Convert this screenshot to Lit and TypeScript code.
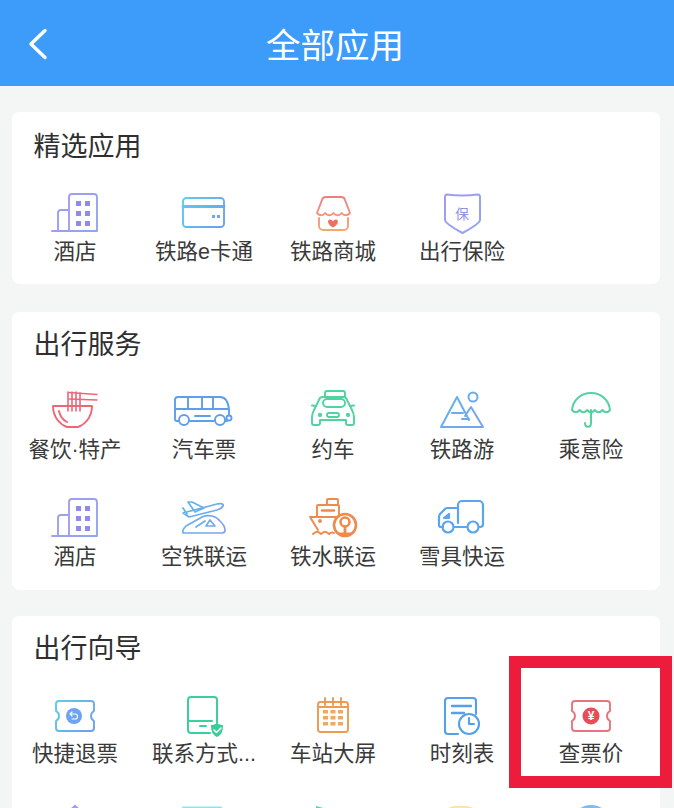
import { LitElement, html, css, svg } from "lit";
import { customElement } from "lit/decorators.js";

const defs = svg`
  <linearGradient id="gPurple" gradientUnits="userSpaceOnUse" x1="0" y1="8" x2="48" y2="46"><stop offset="0" stop-color="#a79af0"/><stop offset="1" stop-color="#8fa6f2"/></linearGradient>
  <linearGradient id="gBlue" gradientUnits="userSpaceOnUse" x1="3" y1="12" x2="44" y2="44"><stop offset="0" stop-color="#58d0e8"/><stop offset="1" stop-color="#6f9cf2"/></linearGradient>
  <linearGradient id="gOrange" gradientUnits="userSpaceOnUse" x1="0" y1="12" x2="0" y2="46"><stop offset="0" stop-color="#ee7d80"/><stop offset="1" stop-color="#f6a872"/></linearGradient>
  <linearGradient id="gSky" gradientUnits="userSpaceOnUse" x1="3" y1="10" x2="45" y2="44"><stop offset="0" stop-color="#58b8ec"/><stop offset="1" stop-color="#7fa0ee"/></linearGradient>
`;

const S = (body: unknown, stroke: string, width = 1.9) => html`<svg class="ic" viewBox="0 0 48 48" fill="none" stroke="${stroke}" stroke-width="${width}" stroke-linecap="round" stroke-linejoin="round"><defs>${defs}</defs>${body}</svg>`;

const ticketPath = "M8 14H40a3 3 0 0 1 3 3v7c-4 2-4 8 0 10v7a3 3 0 0 1-3 3H8a3 3 0 0 1-3-3V34c4-2 4-8 0-10V17a3 3 0 0 1 3-3Z";

const hotel = S(svg`
  <path d="M1 46H46M7 46V28a3 3 0 0 1 3-3h8M18 46V12a3 3 0 0 1 3-3h22a3 3 0 0 1 3 3v34"/>
  <g fill="#8f8aec" stroke="none"><rect x="25" y="16" width="5" height="5"/><rect x="34" y="16" width="5" height="5"/><rect x="25" y="26" width="5" height="5"/><rect x="34" y="26" width="5" height="5"/><rect x="25" y="36" width="5" height="5"/><rect x="34" y="36" width="5" height="5"/></g>`, "url(#gPurple)");
const card = S(svg`
  <rect x="3" y="13" width="41" height="29" rx="3.500"/><path d="M3 21.500H44" stroke-width="2.800"/>
  <path d="M33.500 30v3M38.500 30v3" stroke-width="3" stroke-linecap="butt"/>`, "url(#gBlue)");
const shop = S(svg`
  <path d="M8 28 13 15a4 4 0 0 1 4-3h15a4 4 0 0 1 4 3l5 13c-3 3-6 3-8.250 0-2.500 3-6 3-8.250 0-2.500 3-6 3-8.250 0-2.500 3-5.500 3-8.250 0Z"/>
  <path d="M10 33v8a4 4 0 0 0 4 4h21a4 4 0 0 0 4-4v-8"/>
  <path d="M24 42.500c-6.500-3.500-5.500-8-3-8 1.800 0 3 1.800 3 1.800s1.200-1.800 3-1.800c2.500 0 3.500 4.500-3 8Z" fill="#ef6f5f" stroke="none"/>`, "url(#gOrange)");
const shield = html`<span class="box"><svg class="ic" viewBox="0 0 48 48" fill="none" stroke="url(#gPurple)" stroke-width="2" stroke-linejoin="round"><defs>${defs}</defs><path d="M9 9.500Q24 11.500 40 9.500 42 9.500 42 12V35C42 38 30 45 24.500 48 19 45 7 38 7 35V12Q7 9.500 9 9.500Z"/></svg><span class="bao">保</span></span>`;
const noodle = S(svg`
  <path d="M2 23H41C41 35 33 42 27 44H16C10 42 2 35 2 23Z"/>
  <path d="M8 28c1 5 4 9 8 11"/>
  <path d="M17 28V9M21 28V9M25 28V9M29 28V10" stroke-width="1.600"/>
  <path d="M18 9.500 46 11.500M18 16 46 17" stroke-width="1.600"/>`, "#ee6678");
const bus = S(svg`
  <path d="M-1 38H-3a2 2 0 0 1-2-2V17a3 3 0 0 1 3-3H40c5 0 8 4 9 12v6"/>
  <path d="M-5 26H48M8 14V26M22 14V26M33 14V26M15 33H30M10 38H34"/>
  <circle cx="4" cy="37" r="5"/><circle cx="40" cy="37" r="5"/><path d="M45 38h2"/><circle cx="49" cy="35" r="2.500" fill="#fff"/>`, "#5d9fe8");
const taxi = S(svg`
  <path d="M16 14V10a2 2 0 0 1 2-2H34a2 2 0 0 1 2 2v4"/>
  <path d="M5 27 10 17a4 4 0 0 1 4-3H34a4 4 0 0 1 4 3l5 10"/>
  <path d="M5 27c-1 2-2 4-2 7V40a2 2 0 0 0 2 2h4a2 2 0 0 0 2-2v-3H37v3a2 2 0 0 0 2 2h4a2 2 0 0 0 2-2V34c0-3-1-5-2-7"/>
  <path d="M3 22.500 7 23M45 22.500 41 23"/>
  <rect x="14" y="16" width="22" height="8" rx="4"/><rect x="18" y="30" width="12" height="4" rx="2"/><circle cx="11" cy="32" r="1.200"/><circle cx="39" cy="32" r="1.200"/>`, "#4fd3a0");
const mountain = S(svg`
  <path d="M3 44 19 14 31 37M3 44H45L33 24 27 33"/><path d="M14 30H25M24 36H31"/><circle cx="35" cy="14" r="4.500"/>`, "url(#gSky)", 2);
const umbrella = S(svg`
  <path d="M5 27C6 17 14 10 24 10s18 7 19 17c-2.500 3-5 3-7.600 0-2.500 3-5 3-7.600 0-2.500 3-5 3-7.600 0-2.500 3-5 3-7.600 0-2.500 3-5 3-7.600 0Z"/>
  <path d="M24 27V40c0 5-6 5-6 0"/>`, "#4fd3a0", 2);
const airRail = S(svg`
  <path d="M3 23 37 14c4-1 7 0 6 2-1 2-3 3-6 4L9 27Z"/><path d="M8 12h4l12 6-9 4ZM3 18 7 24"/>
  <path d="M3 43C2 40 4 38 6 36L22 27c7-3 14-1 18 4 3 3 5 6 5 9 0 2-1 3-3 3Z"/><path d="M16 37 25 31M30 30l5 6H26Z"/>`, "url(#gSky)", 1.700);
const ship = S(svg`
  <path d="M18 15V10a1 1 0 0 1 1-1H28a1 1 0 0 1 1 1v5"/><path d="M8 26V16a1 1 0 0 1 1-1H29a1 1 0 0 1 1 1v10"/>
  <path d="M13 20.500H25" stroke-width="2.400"/>
  <path d="M1 27H37M1 27 9 40"/><circle cx="11" cy="31" r="1"/>
  <path d="M4 44c3-3 5-3 8 0 3-3 5-3 8 0 2-2 3-2 5-1"/>
  <circle cx="36" cy="35" r="11" fill="#fff" stroke-width="2.600"/><circle cx="36" cy="32" r="4.500" stroke-width="2.600"/><path d="M36 37V44M31 44H41" stroke-width="2.800"/>`, "#ef8a4c", 1.900);
const truck = S(svg`
  <path d="M20 33V15a4 4 0 0 1 4-4H41a4 4 0 0 1 4 4V34a3 3 0 0 1-3 3H41M29 37H16M5 37H3a2 2 0 0 1-2-2V27c0-1 .5-2 1-3l4-4a5 5 0 0 1 3-2H20"/>
  <path d="M6 28 11 24V28Z"/><circle cx="10" cy="37" r="5.500"/><circle cx="35" cy="37" r="5.500"/>`, "#5aa5ec", 2.200);
const refund = S(svg`
  <path d="${ticketPath}"/><circle cx="23" cy="29" r="8" fill="#6ba4f2" stroke="none"/>
  <path d="M19 27h5a2.500 2.500 0 0 1 0 5h-3M19 27l2-2M19 27l2 2" stroke="#fff" stroke-width="1.200"/>`, "url(#gBlue)");
const phone = S(svg`
  <path d="M30 46H11a3 3 0 0 1-3-3V13a3 3 0 0 1 3-3H34a3 3 0 0 1 3 3v23"/><path d="M8 34H32M20 39H26" />
  <path d="M37 36c2 1.500 4 2 6 2 0 7-2 10-6 12-4-2-6-5-6-12 2 0 4-.500 6-2Z" fill="#37cf96" stroke="none"/>
  <path d="M34 43l2.500 2.500L41 41" stroke="#fff" stroke-width="1.500"/>`, "#3ad09a", 2);
const calendar = S(svg`
  <rect x="9" y="15" width="30" height="30" rx="2.500"/><path d="M9 20H39M16 11V18M24 11V18M32 11V18"/>
  <g fill="#f0a860" stroke="none"><rect x="14" y="23" width="5" height="3.500"/><rect x="21.500" y="23" width="5" height="3.500"/><rect x="29" y="23" width="5" height="3.500"/><rect x="14" y="29" width="5" height="3.500"/><rect x="21.500" y="29" width="5" height="3.500"/><rect x="29" y="29" width="5" height="3.500"/><rect x="14" y="35" width="5" height="3.500"/><rect x="21.500" y="35" width="5" height="3.500"/><rect x="29" y="35" width="5" height="3.500"/></g>`, "#ef9a4e");
const timetable = S(svg`
  <path d="M20 47H10a3 3 0 0 1-3-3V14a3 3 0 0 1 3-3H35a3 3 0 0 1 3 3v13"/><path d="M14 19H33M14 26H26" stroke-width="2.400"/>
  <circle cx="31" cy="37" r="10" fill="#fff"/><path d="M31 31v6h5"/>`, "#55a0ea", 2.100);
const price = html`<span class="box"><svg class="ic" viewBox="0 0 48 48" fill="none" stroke="#e8747f" stroke-width="1.900" stroke-linejoin="round"><path d="${ticketPath}"/><circle cx="24" cy="29" r="8.500" fill="#ea4b58" stroke="none"/></svg><span class="yen">¥</span></span>`;

const peekPurple = S(svg`<path d="M19 15 24 10.500 29 15Z" fill="#a99cec" stroke="none"/>`, "none");
const peekTeal = S(svg`<path d="M3 13.500H41" stroke="#8fe6e0"/>`, "none");
const peekGreen = S(svg`<path d="M7 15V12L18 15Z" fill="#4fd9a4" stroke="none"/>`, "none");
const peekYellow = S(svg`<path d="M11 15C14 12 30 12 35 15" stroke="#f8e3a0"/>`, "none");
const peekBlue = S(svg`<ellipse cx="24" cy="21" rx="15" ry="10" fill="#7cbcf0" stroke="none"/>`, "none");

const items1 = [[hotel, "酒店"], [card, "铁路e卡通"], [shop, "铁路商城"], [shield, "出行保险"]];
const items2 = [[noodle, "餐饮·特产"], [bus, "汽车票"], [taxi, "约车"], [mountain, "铁路游"], [umbrella, "乘意险"],
  [hotel, "酒店"], [airRail, "空铁联运"], [ship, "铁水联运"], [truck, "雪具快运"]];
const items3 = [[refund, "快捷退票"], [phone, "联系方式..."], [calendar, "车站大屏"], [timetable, "时刻表"], [price, "查票价"],
  [peekPurple, ""], [peekTeal, ""], [peekGreen, ""], [peekYellow, ""], [peekBlue, ""]];

@customElement("app-root")
export class AppRoot extends LitElement {
  static styles = css`
    :host { display: block; position: relative; width: 674px; height: 808px; overflow: hidden; background: #f4f6f6;
      font-family: "Liberation Sans", "Noto Sans CJK SC", sans-serif; color: #333; }
    .top { height: 86px; background: #3d9bf9; display: flex; align-items: center; justify-content: center; position: relative; color: #fff; font-size: 34.500px; padding-right: 4px; box-sizing: border-box; }
    .back { position: absolute; left: 28px; top: 27px; width: 20px; height: 35px; }
    .list { display: flex; flex-direction: column; padding: 26px 14px 0 12px; }
    .card { background: #fff; border-radius: 8px; box-sizing: border-box; padding-top: 13px; }
    .card.a { height: 172px; padding-top: 15px; }
    .card.b { height: 278px; margin-top: 28px; }
    .card.c { height: 320px; margin-top: 26px; }
    h2 { margin: 0 0 0 21.500px; font-size: 27px; font-weight: 400; line-height: 40px; color: #2f2f2f; }
    .grid { display: grid; grid-template-columns: repeat(5, 129px); margin: 18px 0 0 -1.500px; }
    .item { display: flex; flex-direction: column; align-items: center; height: 107px; }
    .ic { width: 48px; height: 48px; display: block; overflow: visible; }
    .label { font-size: 21.500px; line-height: 30px; margin-top: 4px; white-space: nowrap; color: #3a3a3a; }
    .box { position: relative; display: block; width: 48px; height: 48px; }
    .bao { position: absolute; inset: 0; padding-top: 8px; display: flex; align-items: center; justify-content: center; font-size: 14px; color: #8f8fe0; }
    .yen { position: absolute; left: 0; right: 0; top: 16px; text-align: center; font-size: 12px; font-weight: 700; line-height: 26px; color: #fff; }
    .frame { position: absolute; left: 509px; top: 656px; width: 163px; height: 132px; box-sizing: border-box; border: 12.500px solid #ee1c3c; }
  `;

  private group(title: string, cls: string, items: unknown[][]) {
    return html`<section class="card ${cls}">
      <h2>${title}</h2>
      <div class="grid">
        ${items.map(([icon, label]) => html`<div class="item">${icon}<div class="label">${label}</div></div>`)}
      </div>
    </section>`;
  }

  render() {
    return html`
      <header class="top">
        <svg class="back" viewBox="0 0 20 35" fill="none" stroke="#fff" stroke-width="3.500" stroke-linecap="round" stroke-linejoin="round"><path d="M17 3.500 3 17 17 30.500"/></svg>
        全部应用
      </header>
      <div class="list">
        ${this.group("精选应用", "a", items1)}
        ${this.group("出行服务", "b", items2)}
        ${this.group("出行向导", "c", items3)}
      </div>
      <div class="frame"></div>
    `;
  }
}
